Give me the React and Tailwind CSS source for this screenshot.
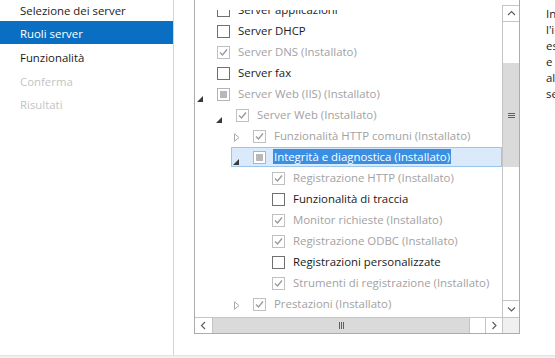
import React from "react";

const rows = [
  { label: "Server applicazioni", level: 0, cb: "off", exp: null, dis: false },
  { label: "Server DHCP", level: 0, cb: "off", exp: null, dis: false },
  { label: "Server DNS (Installato)", level: 0, cb: "on", exp: null, dis: true },
  { label: "Server fax", level: 0, cb: "off", exp: null, dis: false },
  { label: "Server Web (IIS) (Installato)", level: 0, cb: "mid", exp: "open", dis: true },
  { label: "Server Web (Installato)", level: 1, cb: "on", exp: "open", dis: true },
  { label: "Funzionalità HTTP comuni (Installato)", level: 2, cb: "on", exp: "closed", dis: true },
  { label: "Integrità e diagnostica (Installato)", level: 2, cb: "mid", exp: "open", dis: true, sel: true },
  { label: "Registrazione HTTP (Installato)", level: 3, cb: "on", exp: null, dis: true },
  { label: "Funzionalità di traccia", level: 3, cb: "off", exp: null, dis: false },
  { label: "Monitor richieste (Installato)", level: 3, cb: "on", exp: null, dis: true },
  { label: "Registrazione ODBC (Installato)", level: 3, cb: "on", exp: null, dis: true },
  { label: "Registrazioni personalizzate", level: 3, cb: "off", exp: null, dis: false },
  { label: "Strumenti di registrazione (Installato)", level: 3, cb: "on", exp: null, dis: true },
  { label: "Prestazioni (Installato)", level: 2, cb: "on", exp: "closed", dis: true },
  { label: "Sicurezza (Installato)", level: 2, cb: "on", exp: "closed", dis: true },
];

const indent = ["pl-0", "pl-[19px]", "pl-[36px]", "pl-[55px]"];

function Expander({ exp }) {
  return (
    <div className="w-[20px] h-full shrink-0 relative">
      {exp === "open" && (
        <svg className="absolute left-[2px] top-[11px]" width="6" height="6" viewBox="0 0 6 6">
          <polygon points="6,0 6,6 0,6" fill="#3a3a3a" />
        </svg>
      )}
      {exp === "closed" && (
        <svg className="absolute left-[3px] top-[6px]" width="6" height="9" viewBox="0 0 6 9">
          <polygon points="0.5,0.8 5,4.5 0.5,8.2" fill="none" stroke="#a8a8a8" strokeWidth="1" />
        </svg>
      )}
    </div>
  );
}

function Check({ cb }) {
  if (cb === "off") {
    return <div className="w-[13px] h-[13px] shrink-0 ml-[2px] border border-[#707070] bg-white" />;
  }
  if (cb === "mid") {
    return (
      <div className="w-[13px] h-[13px] shrink-0 ml-[2px] border border-[#b4b4b4] bg-white flex items-center justify-center">
        <div className="w-[7px] h-[7px] bg-[#b8b8b8]" />
      </div>
    );
  }
  return (
    <div className="w-[13px] h-[13px] shrink-0 ml-[2px] border border-[#c0c0c0] bg-white flex items-center justify-center">
      <svg width="11" height="11" viewBox="0 0 11 11">
        <polyline points="2,5.5 4.5,8 9,2.5" fill="none" stroke="#9c9c9c" strokeWidth="1.4" />
      </svg>
    </div>
  );
}

function Row({ r }) {
  const text = r.sel ? (
    <span className="bg-[#3b8fe3] text-white px-[1px] -mx-[1px] leading-[13px] py-0">{r.label}</span>
  ) : (
    <span className={r.dis ? "text-[#a2a2a2]" : "text-[#1a1a1a]"}>{r.label}</span>
  );
  return (
    <div className={`h-[21px] ${indent[r.level]}`}>
      <div
        className={`h-[20px] flex items-center whitespace-nowrap ${
          r.sel ? "bg-[#dbeafa] border border-[#98c6ee]" : "border border-transparent"
        }`}
      >
        <div className="-ml-[1px] flex items-center h-full">
          <Expander exp={r.exp} />
          <Check cb={r.cb} />
          <div className="ml-[8px]">{text}</div>
        </div>
      </div>
    </div>
  );
}

function Chevron({ dir }) {
  if (dir === "left" || dir === "right") {
    const p = dir === "left" ? "5,1 1.5,4.5 5,8" : "1.5,1 5,4.5 1.5,8";
    return (
      <svg width="7" height="9" viewBox="0 0 7 9">
        <polyline points={p} fill="none" stroke="#5a5a5a" strokeWidth="1.1" />
      </svg>
    );
  }
  const pts = dir === "up" ? "1,5 4.5,1.5 8,5" : "1,1.5 4.5,5 8,1.5";
  return (
    <svg width="9" height="7" viewBox="0 0 9 7">
      <polyline points={pts} fill="none" stroke="#5a5a5a" strokeWidth="1.1" />
    </svg>
  );
}

export default function App() {
  return (
    <div
      className="w-[555px] h-[358px] bg-white overflow-hidden flex flex-col text-[11.4px]"
      style={{ fontFamily: '"Segoe UI", "Open Sans", "Noto Sans", sans-serif' }}
    >
      <div className="flex h-[355px]">
        {/* Left nav */}
        <div className="w-[174px] shrink-0 border-r border-[#d4d4d4] flex flex-col">
          <div className="h-[21px] flex items-center pl-[20px] text-[#1a1a1a]">Selezione dei server</div>
          <div className="h-[23px] flex items-center pl-[20px] bg-[#0a6fc2] text-white pt-[2px]">Ruoli server</div>
          <div className="h-[24px] flex items-center pl-[20px] text-[#1a1a1a] pt-[4px]">Funzionalità</div>
          <div className="h-[24px] flex items-center pl-[20px] text-[#c4c4c4] pt-[3px]">Conferma</div>
          <div className="h-[24px] flex items-center pl-[20px] text-[#c4c4c4] pt-[2px]">Risultati</div>
        </div>

        {/* Tree box */}
        <div className="ml-[20px] w-[326px] h-[334px] shrink-0 border-l border-r border-b border-[#acacac] flex flex-col">
          <div className="flex h-[317px]">
            <div className="flex-1 pt-[10px]">
              <div className="h-[307px] overflow-hidden">
                <div className="-mt-[10px]">
                  {rows.map((r, i) => (
                    <Row key={i} r={r} />
                  ))}
                </div>
              </div>
            </div>
            {/* vertical scrollbar */}
            <div className="w-[17px] shrink-0 flex flex-col">
              <div className="h-[5px]" />
              <div className="h-[17px] border-l border-t border-b border-[#c4c4c4] flex items-center justify-center bg-white">
                <Chevron dir="up" />
              </div>
              <div className="flex-1 border-l border-[#c4c4c4] bg-white flex flex-col">
                <div className="h-[41px]" />
                <div className="h-[104px] bg-[#dadada] flex items-center justify-center">
                  <div className="flex flex-col gap-[1px]">
                    <div className="w-[7px] h-[1px] bg-[#606060]" />
                    <div className="w-[7px] h-[1px] bg-[#606060]" />
                    <div className="w-[7px] h-[1px] bg-[#606060]" />
                  </div>
                </div>
              </div>
              <div className="h-[17px] border-l border-t border-[#c4c4c4] flex items-center justify-center bg-white">
                <Chevron dir="down" />
              </div>
            </div>
          </div>
          {/* horizontal scrollbar */}
          <div className="h-[16px] flex border-t border-[#c4c4c4]">
            <div className="w-[18px] border-r border-[#c4c4c4] flex items-center justify-center bg-white">
              <Chevron dir="left" />
            </div>
            <div className="w-[257px] bg-[#dadada] border-r border-[#c4c4c4] flex items-center justify-center">
              <div className="flex gap-[1px]">
                <div className="w-[1px] h-[7px] bg-[#606060]" />
                <div className="w-[1px] h-[7px] bg-[#606060]" />
                <div className="w-[1px] h-[7px] bg-[#606060]" />
              </div>
            </div>
            <div className="w-[15px] bg-white" />
            <div className="w-[17px] border-l border-[#c4c4c4] flex items-center justify-center bg-white">
              <Chevron dir="right" />
            </div>
            <div className="flex-1 border-l border-[#c4c4c4] bg-[#f0f0f0]" />
          </div>
        </div>

        {/* Right description */}
        <div className="ml-[26px] w-[260px] shrink-0 pt-[6px] leading-[16px] text-[#1a1a1a] whitespace-nowrap">
          <div>Internet Information Services (IIS) fornisce</div>
          <div>l'infrastruttura per applicazioni Web</div>
          <div>estremamente affidabile, gestibile e scalabile</div>
          <div>
            e <span className="text-[#e3b321]">l'infrastruttura</span>
          </div>
          <div>alla base delle applicazioni</div>
          <div>server Web.</div>
        </div>
      </div>
      <div className="h-[3px] bg-[#f0f0f0] border-t border-[#e3e3e3]" />
    </div>
  );
}
